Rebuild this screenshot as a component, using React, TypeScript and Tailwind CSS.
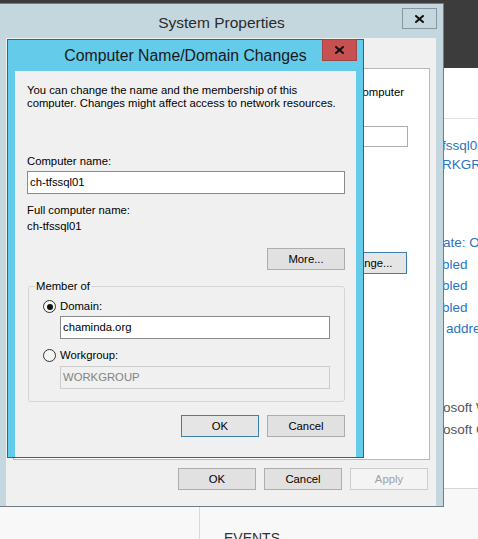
import React from 'react';

type BtnKind = 'normal' | 'default' | 'disabled';

function Button({ label, kind = 'normal', className = '' }: { label: string; kind?: BtnKind; className?: string }) {
  const tone =
    kind === 'default'
      ? 'border-[#3c7fb1] bg-[#e5e5e5] text-black'
      : kind === 'disabled'
        ? 'border-[#cccccc] bg-[#f4f4f4] text-[#a0a0a0]'
        : 'border-[#adadad] bg-[#e1e1e1] text-black';
  return (
    <div className={`flex h-[22px] w-[78px] shrink-0 items-center justify-center border text-[11.3px] ${tone} ${className}`}>
      {label}
    </div>
  );
}

function Radio({ checked }: { checked?: boolean }) {
  return (
    <span className="flex h-[13px] w-[13px] items-center justify-center rounded-full border border-[#333333] bg-[#f6f6f6]">
      {checked && <span className="h-[6px] w-[6px] rounded-full bg-[#111111]" />}
    </span>
  );
}

function CloseGlyph() {
  return (
    <svg width="9" height="8" viewBox="0 0 9 8" aria-hidden="true">
      <path d="M1 1 L8 7 M8 1 L1 7" stroke="#111" strokeWidth="2" strokeLinecap="square" />
    </svg>
  );
}

export default function App() {
  return (
    <div className="relative h-[539px] w-[478px] overflow-hidden bg-white font-['Liberation_Sans',Arial,sans-serif]">
      {/* Server Manager, behind the dialogs */}
      <div className="flex h-full flex-col">
        <div className="h-[68px] shrink-0 bg-[#3c3c3c]" />
        <div className="h-[51px] shrink-0 border-b border-[#e3e3e3] bg-white" />
        <div className="h-[369px] shrink-0 whitespace-nowrap bg-white pl-[444px] text-[13.5px]">
          <div className="flex flex-col pt-[17px] leading-[19px] text-[#2b74c0]">
            <span className="ml-[-2px]">fssql01</span>
            <span className="ml-[-2px]">RKGROUP</span>
          </div>
          <div className="mt-[58px] flex flex-col leading-[21.5px] text-[#2b74c0]">
            <span className="ml-[-1px]">ate: On</span>
            <span className="ml-[-2px]">bled</span>
            <span className="ml-[-2px]">bled</span>
            <span className="ml-[-2px]">bled</span>
            <span className="ml-[2px]">address</span>
          </div>
          <div className="mt-[57px] flex flex-col leading-[22px] text-[#555555]">
            <span className="ml-[-1px]">osoft Windows</span>
            <span className="ml-[-1px]">osoft Corporation</span>
          </div>
        </div>
        <div className="flex flex-1 border-t border-[#d6d6d6] bg-[#f8f8f8]">
          <div className="w-[200px] shrink-0 border-r border-[#d9d9d9]" />
          <div className="pl-[24px] pt-[41px] text-[14px] leading-[16px] text-[#333333]">EVENTS</div>
        </div>
      </div>

      {/* System Properties (inactive) */}
      <div className="absolute left-[-1px] top-[3px] flex h-[504px] w-[445px] flex-col border border-[#6f7d84] bg-[#c5d7de]">
        <div className="relative flex h-[34px] shrink-0 items-center justify-center pt-[3px] text-[15.5px] text-[#2b2b2b]">
          System Properties
          <div className="absolute right-[6px] top-[4px] flex h-[21px] w-[35px] items-center justify-center border border-[#8796a0] bg-[#c5d7de]">
            <CloseGlyph />
          </div>
        </div>
        <div className="ml-[6px] mr-[7px] flex flex-1 flex-col bg-[#f0f0f0]">
          <div className="ml-[7px] mr-[6px] mt-[30px] flex h-[392px] flex-col items-end border border-[#b9b9b9] bg-white pr-[21px] pt-[16px] text-[11.3px] text-black">
            <div className="mr-[4px] whitespace-nowrap leading-[14px]">your computer</div>
            <div className="mt-[27px] h-[21px] w-[240px] border border-[#abadb3] bg-white" />
            <Button label="Change..." kind="default" className="mr-[1px] mt-[105px]" />
          </div>
          <div className="mt-[8px] flex justify-end gap-[8px] pr-[8px]">
            <Button label="OK" />
            <Button label="Cancel" />
            <Button label="Apply" kind="disabled" />
          </div>
        </div>
      </div>

      {/* Computer Name/Domain Changes (active) */}
      <div className="absolute left-[7px] top-[39px] flex h-[419px] w-[357px] flex-col border border-[#42606c] bg-[#65cbea]">
        <div className="relative flex h-[31px] shrink-0 items-center justify-center text-[15.8px] text-[#1a1a1a]">
          Computer Name/Domain Changes
          <div className="absolute right-[6px] top-[-1px] flex h-[22px] w-[35px] items-center justify-center border border-[#a24444] bg-[#c75050]">
            <CloseGlyph />
          </div>
        </div>
        <div className="mx-[7px] flex flex-1 flex-col bg-[#f0f0f0] pl-[12px] text-[11.3px] leading-[13px] text-black">
          <p className="whitespace-nowrap pt-[13px]">
            You can change the name and the membership of this
            <br />
            computer. Changes might affect access to network resources.
          </p>
          <div className="mt-[45px]">Computer name:</div>
          <div className="mt-[3px] flex h-[23px] w-[318px] items-center border border-[#8a8a8a] bg-white pl-[2px]">
            ch-tfssql01
          </div>
          <div className="mt-[10px]">Full computer name:</div>
          <div className="mt-[3px]">ch-tfssql01</div>
          <Button label="More..." className="mr-[11px] mt-[15px] self-end" />
          <fieldset className="ml-[1px] mr-[11px] mt-[10px] rounded-[3px] border border-[#d5d5d5] pb-[12px] pl-[6px]">
            <legend className="px-[1px] leading-[13px]">Member of</legend>
            <div className="flex flex-col pl-[8px]">
              <div className="mt-[7px] flex h-[13px] items-center gap-[4px]">
                <Radio checked />
                <span>Domain:</span>
              </div>
              <div className="ml-[17px] mt-[3px] flex h-[23px] w-[270px] items-center border border-[#8a8a8a] bg-white pl-[2px]">
                chaminda.org
              </div>
              <div className="mt-[10px] flex h-[13px] items-center gap-[4px]">
                <Radio />
                <span>Workgroup:</span>
              </div>
              <div className="ml-[17px] mt-[4px] flex h-[23px] w-[270px] items-center border border-[#cccccc] bg-[#f0f0f0] pl-[2px] text-[#838383]">
                WORKGROUP
              </div>
            </div>
          </fieldset>
          <div className="mt-[13px] flex justify-end gap-[8px] pr-[11px]">
            <Button label="OK" kind="default" />
            <Button label="Cancel" />
          </div>
        </div>
      </div>
    </div>
  );
}
